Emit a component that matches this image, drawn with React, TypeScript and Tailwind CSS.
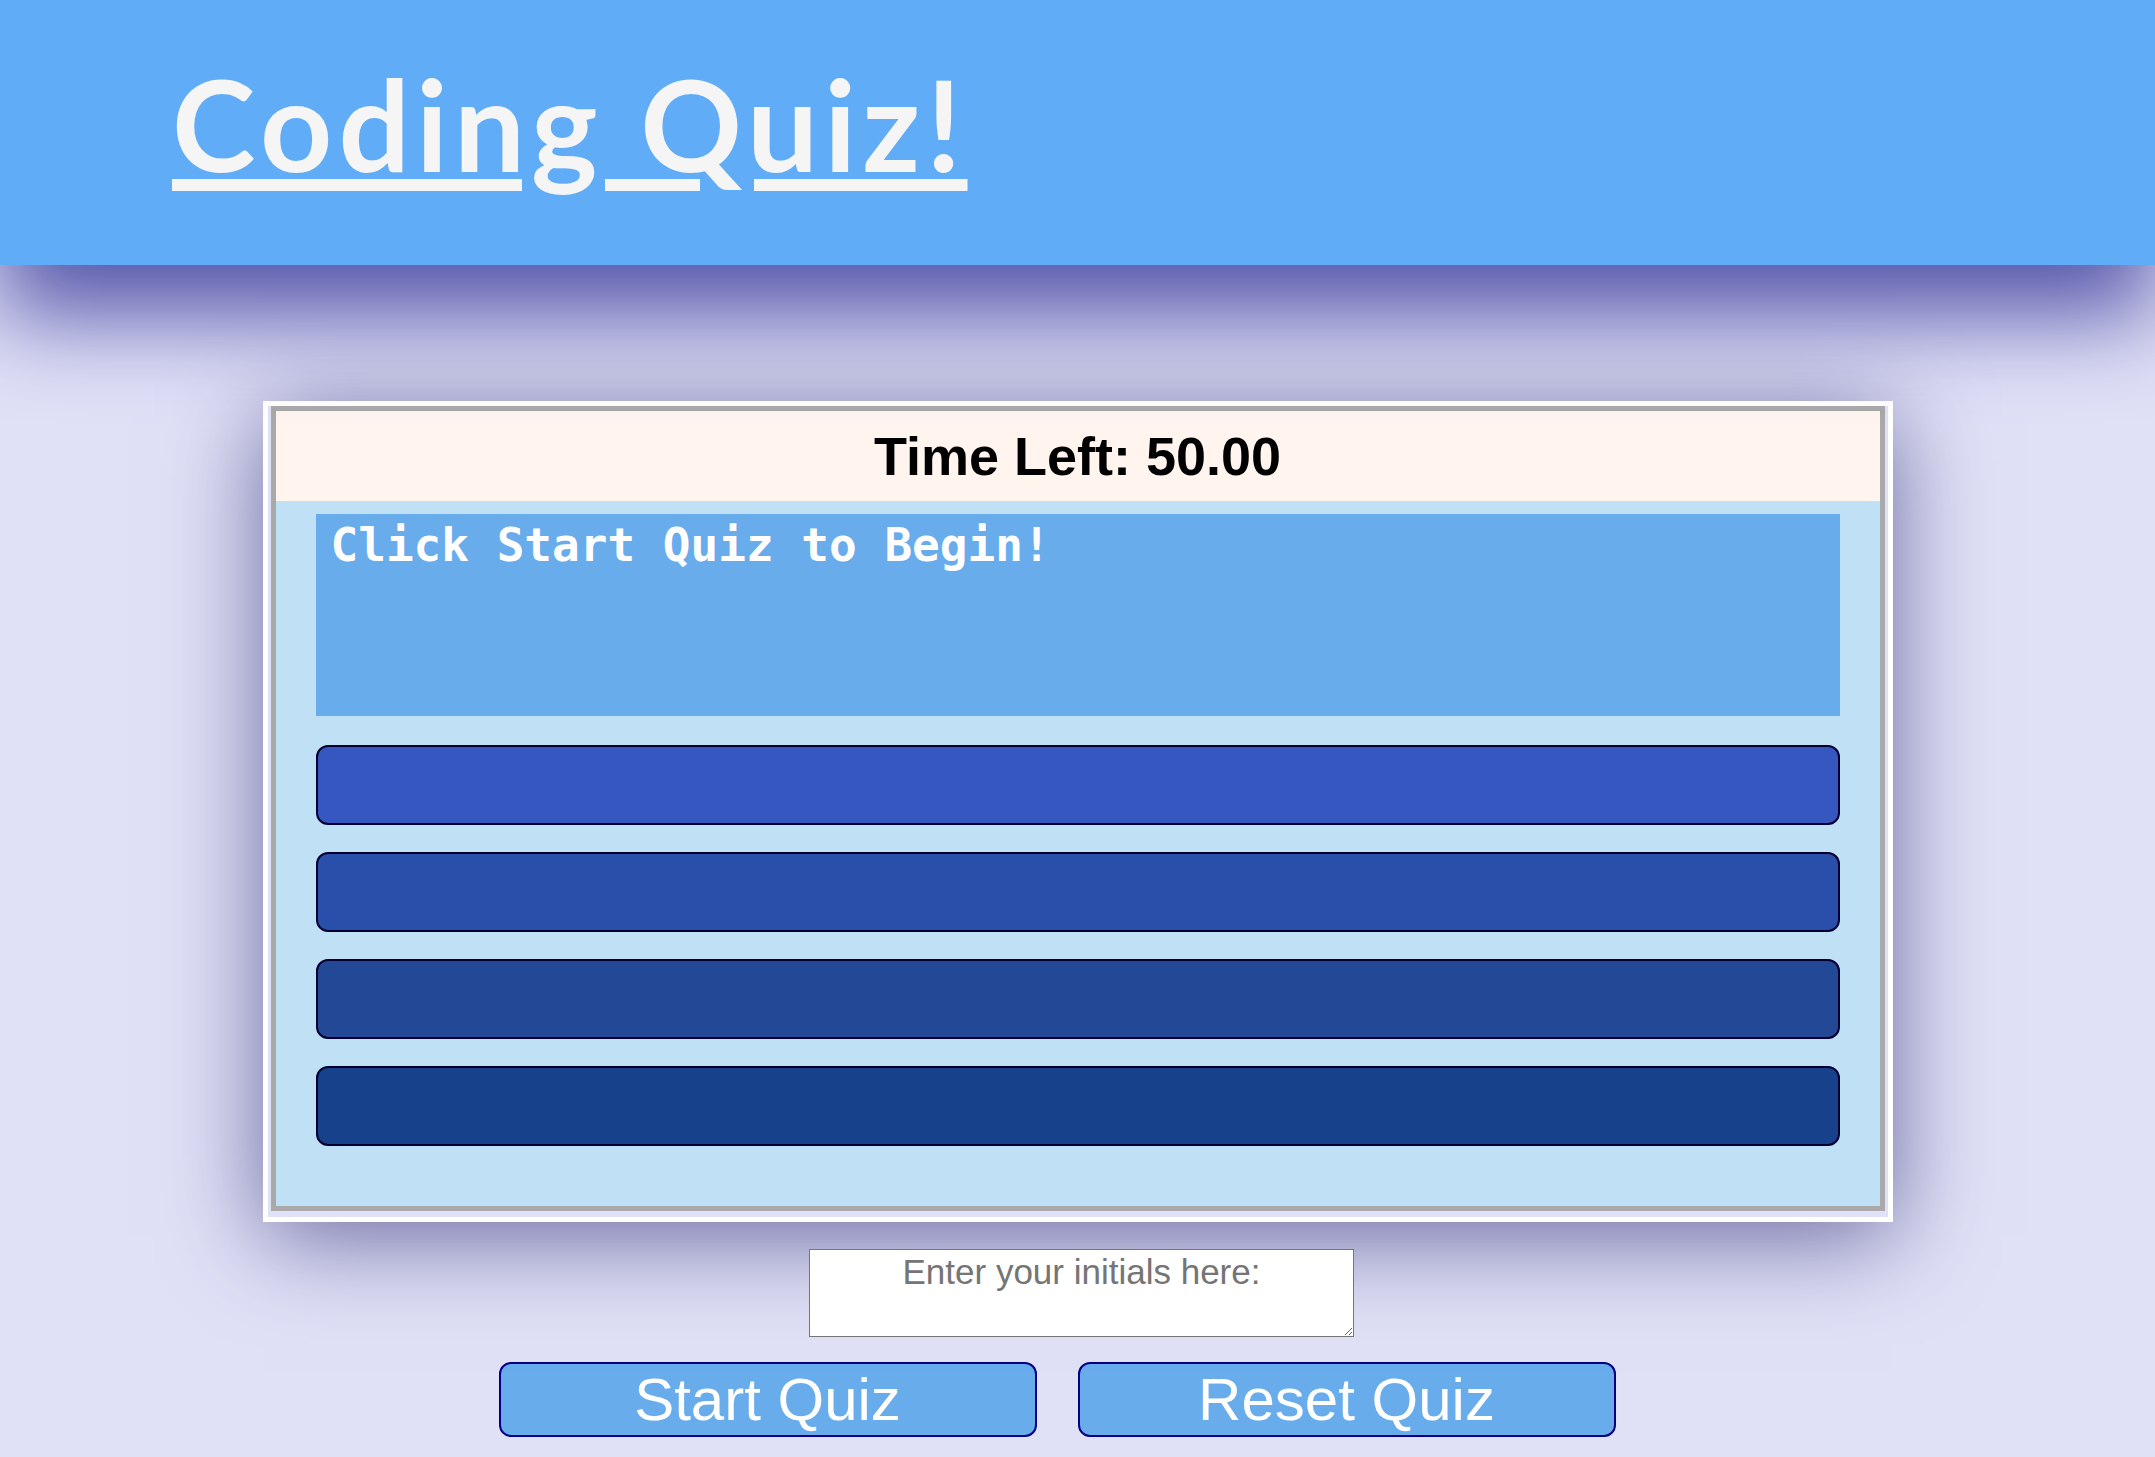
const answerColors = ["bg-[#3656c0]", "bg-[#2a4faa]", "bg-[#234896]", "bg-[#17418b]"];

export default function App() {
  return (
    <div className="min-h-screen bg-[#e0e0f6] font-['Liberation_Sans',Arial,sans-serif]">
      {/* header */}
      <header className="relative z-10 h-[265px] bg-[#60acf6] pl-[172px] pt-[48px] shadow-[0_50px_90px_rgb(85,85,170)]">
        <h1 className="font-['Lato',sans-serif] text-[126px] font-bold leading-[1.2] tracking-[6px] text-[#f5f5f5] underline decoration-[length:12px] underline-offset-[7px]">
          Coding Quiz!
        </h1>
      </header>

      {/* quiz card */}
      <main className="flex flex-col items-center pt-[136px]">
        <div className="relative z-0 w-[1630px] border-[5px] border-white bg-[#e0e0f6] px-[3px] pb-[6px] shadow-[0_15px_90px_rgb(105,105,160)]">
          <div className="border-[5px] border-[#a9a9a9]">
            <div className="bg-[#fff4ee] py-[14px] text-center text-[54px] font-bold leading-[62px] text-black">
              Time Left: 50.00
            </div>
            <div className="bg-[#c0e0f6] px-[40px] pt-[13px] pb-[60px]">
              <div className="h-[202px] bg-[#68acec] px-[15px] pt-[7px] font-['DejaVu_Sans_Mono',monospace] text-[46px] font-bold leading-[48px] text-white">
                Click Start Quiz to Begin!
              </div>
              <div className="mt-[29px] flex flex-col gap-[27px]">
                {answerColors.map((c) => (
                  <button
                    key={c}
                    className={`h-[80px] w-full rounded-[12px] border-2 border-[#000030] ${c}`}
                  />
                ))}
              </div>
            </div>
          </div>
        </div>

        {/* initials */}
        <textarea
          placeholder="Enter your initials here:"
          className="relative z-10 mt-[27px] ml-[8px] h-[88px] w-[545px] border border-[#767676] bg-white px-[2px] pt-[7px] text-center text-[35px] leading-[30px] text-black placeholder:text-[#757575]"
        />

        {/* controls */}
        <div className="mt-[25px] flex">
          <button className="mr-[41px] h-[75px] w-[538px] rounded-[12px] border-2 border-[#000080] bg-[#68acec] text-[60px] leading-none text-white">
            Start Quiz
          </button>
          <button className="mr-[41px] h-[75px] w-[538px] rounded-[12px] border-2 border-[#000080] bg-[#68acec] text-[60px] leading-none text-white">
            Reset Quiz
          </button>
        </div>
      </main>
    </div>
  );
}
